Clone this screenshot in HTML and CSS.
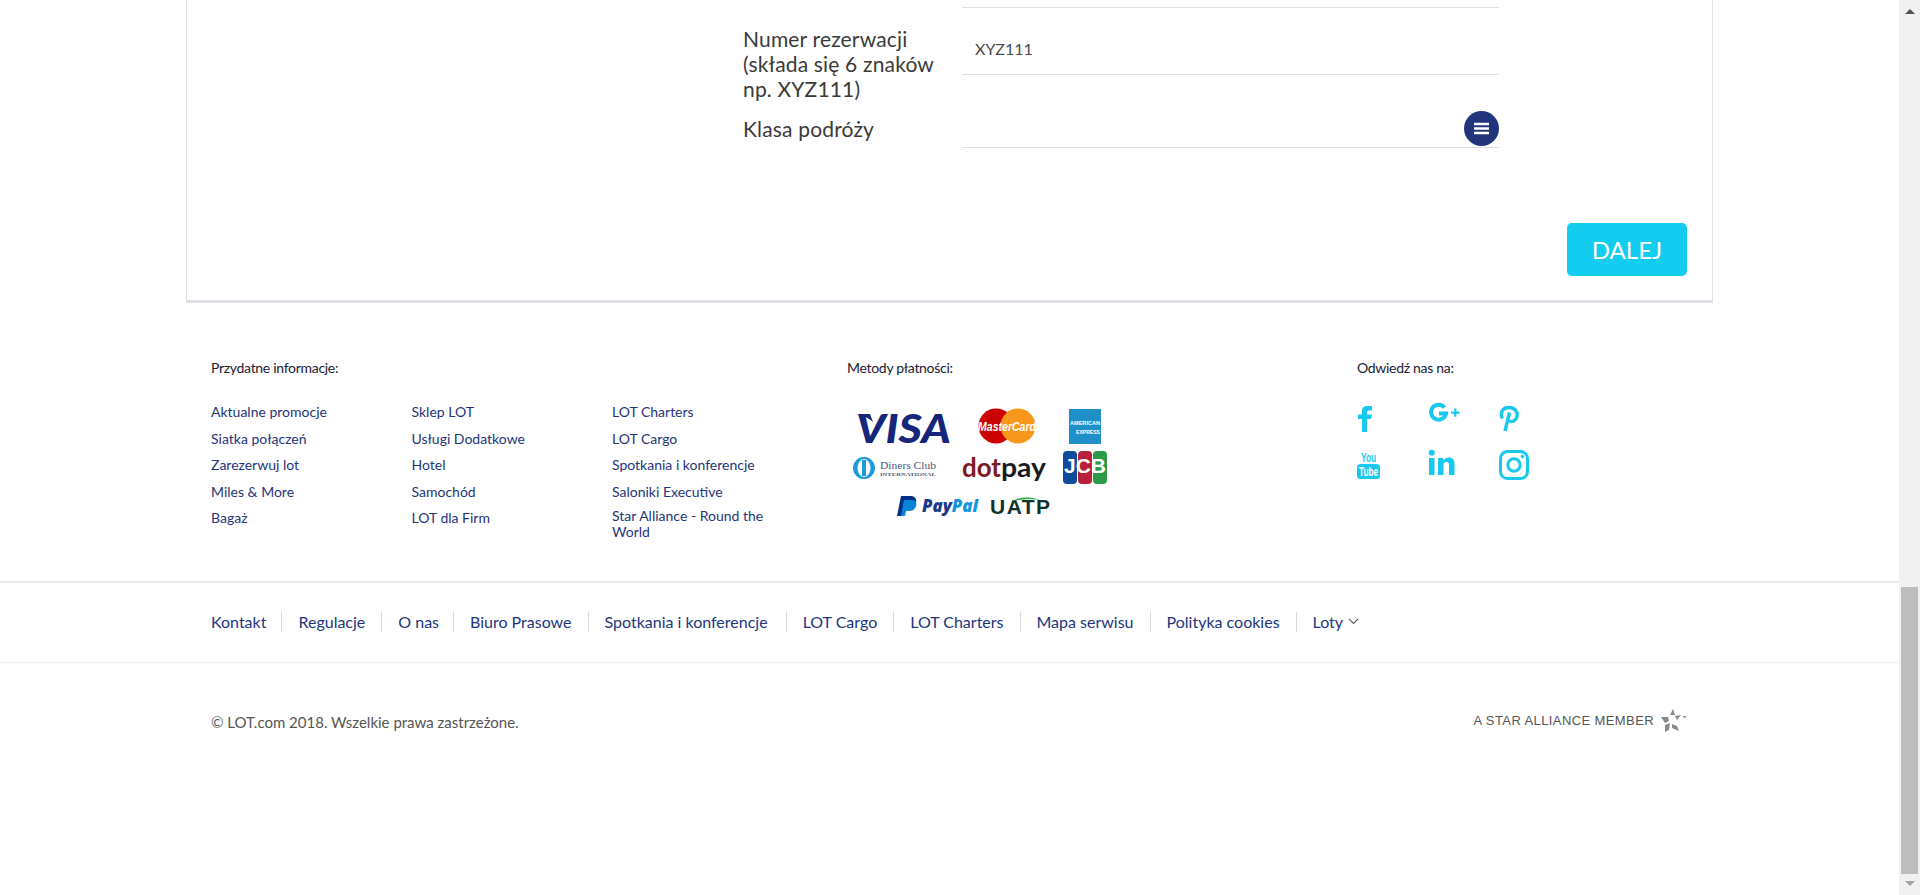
FILE: index.html
```html
<!DOCTYPE html>
<html lang="pl">
<head>
<meta charset="utf-8">
<title>LOT</title>
<link rel="stylesheet" href="styles.css">
</head>
<body>
<div class="window">
  <div class="page">
    <section class="card">
      <div class="stub"></div>
      <div class="form-row">
        <label class="label label-first">Numer rezerwacji<br>(składa się 6 znaków<br>np. XYZ111)</label>
        <div class="field field-text">XYZ111</div>
      </div>
      <div class="form-row">
        <label class="label label-second">Klasa podróży</label>
        <div class="field field-select">
          <span class="select-btn">
            <svg width="15" height="13" viewBox="0 0 15 13"><path d="M0 2h15M0 6.500h15M0 11h15" stroke="#fff" stroke-width="2.400"/></svg>
          </span>
        </div>
      </div>
      <div class="card-actions"><button class="btn">DALEJ</button></div>
    </section>

    <section class="info">
      <div class="info-links">
        <h4 class="info-title">Przydatne informacje:</h4>
        <div class="link-cols">
          <ul class="link-col">
            <li>Aktualne promocje</li><li>Siatka połączeń</li><li>Zarezerwuj lot</li><li>Miles &amp; More</li><li>Bagaż</li>
          </ul>
          <ul class="link-col">
            <li>Sklep LOT</li><li>Usługi Dodatkowe</li><li>Hotel</li><li>Samochód</li><li>LOT dla Firm</li>
          </ul>
          <ul class="link-col">
            <li>LOT Charters</li><li>LOT Cargo</li><li>Spotkania i konferencje</li><li>Saloniki Executive</li><li class="two-line">Star Alliance - Round the World</li>
          </ul>
        </div>
      </div>
      <div class="info-pay">
        <h4 class="info-title">Metody płatności:</h4>
        <svg class="pay-logos" width="270" height="120" viewBox="0 0 270 120">
          <!-- VISA -->
          <text x="9" y="38" class="t-visa" textLength="95" lengthAdjust="spacingAndGlyphs">VISA</text>
          <path d="M10 9h13l3 8C22 13 16 11 10 9z" fill="#16267a"/>
          <!-- MasterCard -->
          <circle cx="149" cy="21" r="17.500" fill="#cc0000"/>
          <circle cx="171" cy="21" r="17.500" fill="#f7981d"/>
          <text x="131" y="26" class="t-mc" textLength="58" lengthAdjust="spacingAndGlyphs">MasterCard</text>
          <!-- Amex -->
          <rect x="222" y="4" width="32" height="35" fill="#1f8fc9"/>
          <text x="223" y="20" class="t-amex" textLength="30" lengthAdjust="spacingAndGlyphs">AMERICAN</text>
          <text x="229" y="29" class="t-amex" textLength="24" lengthAdjust="spacingAndGlyphs">EXPRESS</text>
          <!-- Diners -->
          <circle cx="17" cy="63" r="11" fill="#1e9be0"/>
          <ellipse cx="17" cy="63" rx="6.500" ry="9" fill="#fff"/>
          <rect x="15" y="55" width="4" height="16" fill="#1e9be0"/>
          <text x="33" y="64" class="t-dc" textLength="56" lengthAdjust="spacingAndGlyphs">Diners Club</text>
          <text x="33" y="71" class="t-dc2" textLength="56" lengthAdjust="spacingAndGlyphs">INTERNATIONAL</text>
          <!-- dotpay -->
          <text x="115" y="72" class="t-dot" textLength="39" lengthAdjust="spacingAndGlyphs">dot</text>
          <text x="154" y="72" class="t-pay" textLength="45" lengthAdjust="spacingAndGlyphs">pay</text>
          <!-- JCB -->
          <rect x="216" y="46" width="14" height="33" rx="4" fill="#0f4c9c"/>
          <rect x="231" y="46" width="14" height="33" rx="4" fill="#b81f3a"/>
          <rect x="246" y="46" width="14" height="33" rx="4" fill="#2c9b47"/>
          <text x="217" y="68" class="t-jcb" textLength="42" lengthAdjust="spacingAndGlyphs">JCB</text>
          <!-- PayPal -->
          <path d="M54 91h9c5 0 7 3 6 7-1 4-4 6-8 6h-3l-2 7h-6z" fill="#003087"/>
          <path d="M57 95h8c4 0 5 3 4 6-1 3-3 5-7 5h-3l-1 5h-4z" fill="#0a84d6"/>
          <text x="75" y="107" class="t-pp" textLength="56" lengthAdjust="spacingAndGlyphs"><tspan fill="#1b3a8c">Pay</tspan><tspan fill="#1494dc">Pal</tspan></text>
          <!-- UATP -->
          <text x="143" y="109" class="t-uatp" textLength="60" lengthAdjust="spacing">UATP</text>
          <path d="M163 97c8-5 20-6 30-2-10-2-20-1-30 2z" fill="#2aa84a"/>
        </svg>
      </div>
      <div class="info-social">
        <h4 class="info-title">Odwiedź nas na:</h4>
        <div class="social-grid">
          <svg class="social" viewBox="0 0 36 36"><path d="M5 29V16H1v-4.500h4V8c0-3.600 2-5 5.300-5H15v4.600h-2.800C10.800 7.600 10 8 10 9.600v1.900h4.800l-.6 4.500H10v13z"/></svg>
          <svg class="social" viewBox="0 0 36 36"><path class="s-line" d="M16.500 4.500A7.500 7.500 0 1 0 18 10.500H11"/><path d="M23 8.500h3.200V5.500h2.200v3H31.500v2.200h-3.100v3h-2.200v-3H23z"/></svg>
          <svg class="social" viewBox="0 0 36 36"><path class="s-pin" d="M3.500 15.500C.5 10 3.500 4.500 10 4.500c5.800 0 9 4.500 8 9-1 4-5 6.500-8 4"/><path class="s-pin" d="M10.500 9.500L6 28"/></svg>
          <svg class="social" viewBox="0 0 36 36"><text x="4" y="13" class="t-you" textLength="15" lengthAdjust="spacingAndGlyphs">You</text><rect x="0" y="15" width="23" height="15" rx="3.500"/><text x="2" y="27" class="t-tube" textLength="19" lengthAdjust="spacingAndGlyphs">Tube</text></svg>
          <svg class="social" viewBox="0 0 36 36"><rect x="1" y="9" width="5.500" height="17"/><circle cx="3.700" cy="3.700" r="3"/><path d="M10 9h5.300v2.400C16.500 9.600 18.500 8.500 21 8.500c4 0 5.500 2.600 5.500 6.500v11H21V16c0-2-.7-3-2.500-3S15.500 14 15.500 16v10H10z"/></svg>
          <svg class="social" viewBox="0 0 36 36"><rect class="s-line3" x="1.500" y="2.500" width="27" height="27" rx="7"/><circle class="s-line3" cx="15" cy="16" r="6.200"/><circle cx="23.500" cy="7.500" r="1.800"/></svg>
        </div>
      </div>
    </section>

    <nav class="nav-row">
      <a class="nav-item nav-first">Kontakt</a>
      <a class="nav-item">Regulacje</a>
      <a class="nav-item nav-tight">O nas</a>
      <a class="nav-item">Biuro Prasowe</a>
      <a class="nav-item nav-wide">Spotkania i konferencje</a>
      <a class="nav-item">LOT Cargo</a>
      <a class="nav-item">LOT Charters</a>
      <a class="nav-item">Mapa serwisu</a>
      <a class="nav-item">Polityka cookies</a>
      <a class="nav-item nav-last">Loty
        <svg class="chev" width="11" height="7" viewBox="0 0 11 7"><path d="M.8.800L5.500 5.500 10.200.800" fill="none" stroke="#555b66" stroke-width="1.100"/></svg>
      </a>
    </nav>

    <div class="copy-row">
      <span class="copy">© LOT.com 2018. Wszelkie prawa zastrzeżone.</span>
      <span class="star">
        <span class="star-text">A STAR ALLIANCE MEMBER</span>
        <svg width="25" height="23" viewBox="0 0 25 23"><g fill="#8a8a8a"><path d="M12 0l2 6-5 0z"/><path d="M14 7l6-1-4 5z"/><path d="M0 8l7 0 1 4-4 2z"/><path d="M4 16l5-2-1 7-4 2z"/><path d="M11 15l5 2 2 5-7-3z"/><rect x="22" y="7" width="3" height="1.500"/></g></svg>
      </span>
    </div>
  </div>
  <aside class="scrollbar">
    <span class="arrow arrow-up"></span>
    <span class="thumb"></span>
    <span class="arrow arrow-down"></span>
  </aside>
</div>
</body>
</html>
```

FILE: styles.css
```css
* { box-sizing: border-box; }
html, body { margin: 0; padding: 0; height: 100%; overflow: hidden; background: #fff; }
body { font-family: Lato, "Noto Sans", sans-serif; color: #333; }
.window { display: flex; width: 1920px; height: 895px; }
.page { width: 1899px; height: 895px; overflow: hidden; }

.card { width: 1527px; height: 303px; margin-left: 186px; border: 1px solid #e1e2e8; border-top: 0; border-bottom: 3px solid #dfe0e6; }
.stub { width: 537px; height: 8px; margin-left: 775px; border-bottom: 1px solid #dcdee8; }
.form-row { display: grid; grid-template-columns: 219px 537px; margin-left: 556px; }
.label { display: block; font-size: 21px; letter-spacing: .17px; line-height: 25px; color: #3a3a3a; white-space: nowrap; }
.label-first { padding: 18px 0 1px; }
.label-second { padding-top: 14px; }
.field { border-bottom: 1px solid #dcdee8; }
.field-text { height: 67px; padding: 31px 0 0 13px; font-size: 16px; line-height: 20px; color: #4a4a4a; }
.field-select { height: 46px; display: flex; justify-content: flex-end; align-items: flex-start; padding-top: 9px; }
.select-btn { width: 35px; height: 35px; border-radius: 50%; background: #22357c; display: flex; align-items: center; justify-content: center; }
.card-actions { display: flex; justify-content: flex-end; margin-top: 75px; padding-right: 25px; }
.btn { width: 120px; height: 53px; border: 0; border-radius: 5px; background: #13cdf0; color: #fff; font: 400 24px Lato, sans-serif; padding: 0; }

.info { display: flex; height: 278px; padding: 57px 0 0 211px; }
.info-links { width: 636px; }
.info-pay { width: 510px; }
.info-title { margin: 0; font-size: 14px; letter-spacing: -.3px; line-height: 16px; font-weight: 400; color: #1b2033; }
.link-cols { display: flex; margin-top: 23px; }
.link-col { list-style: none; margin: 0; padding: 0; width: 200.500px; }
.link-col li { height: 26.500px; font-size: 14px; line-height: 26.500px; color: #25357a; }
.link-col li.two-line { line-height: 16px; width: 170px; padding-top: 3px; }
.pay-logos { display: block; margin: 29px 0 0 0; }
.t-visa { font: italic 900 40px Lato, sans-serif; fill: #16267a; }
.t-mc { font: italic 700 12px "Liberation Sans", sans-serif; fill: #fff; }
.t-amex { font: 700 6px "Liberation Sans", sans-serif; fill: #fff; }
.t-dc { font: 400 11px "Liberation Serif", serif; fill: #4c5a7a; }
.t-dc2 { font: 700 5px "Liberation Serif", serif; fill: #4c5a7a; }
.t-dot { font: 700 26px Lato, sans-serif; fill: #7c1a24; }
.t-pay { font: 700 26px Lato, sans-serif; fill: #1a1a22; }
.t-jcb { font: 700 20px "Liberation Sans", sans-serif; fill: #fff; }
.t-pp { font: italic 900 17px "Open Sans", sans-serif; }
.t-uatp { font: 700 21px "Liberation Sans", sans-serif; fill: #10322c; }

.social-grid { display: grid; grid-template-columns: repeat(3, 71px); grid-auto-rows: 46px; margin-top: 27px; }
.social { width: 36px; height: 36px; fill: #17c9ef; overflow: visible; }
.s-line { fill: none; stroke: #17c9ef; stroke-width: 4; }
.s-pin { fill: none; stroke: #17c9ef; stroke-width: 3.400; }
.s-line3 { fill: none; stroke: #17c9ef; stroke-width: 3; }
.t-you { font: 700 13px "Liberation Sans", sans-serif; fill: #17c9ef; }
.t-tube { font: 700 12px "Liberation Sans", sans-serif; fill: #fff; }

.nav-row { display: flex; align-items: center; height: 82px; padding: 0 0 2px 195px; border-top: 2px solid #e9eaee; border-bottom: 1px solid #eceef2; }
.nav-item { display: block; padding: 0 16px; height: 20px; font-size: 16px; line-height: 20px; color: #22357c; border-right: 1px solid #d9dade; white-space: nowrap; }
.nav-first { padding-right: 15px; }
.nav-tight { padding-right: 14px; }
.nav-wide { padding-right: 18px; }
.nav-last { border-right: 0; display: flex; align-items: center; gap: 5px; }
.copy-row { display: flex; justify-content: space-between; align-items: center; width: 1686px; padding: 46px 0 0 211px; }
.copy { font-size: 15px; line-height: 20px; color: #555; }
.star { display: flex; align-items: center; gap: 7px; margin-bottom: 2px; }
.star-text { font: 400 13px "Liberation Sans", sans-serif; letter-spacing: .4px; color: #555; white-space: nowrap; }

.scrollbar { position: relative; width: 21px; height: 895px; background: #f1f1f1; }
.thumb { position: absolute; left: 2px; top: 587px; width: 17px; height: 287px; background: #bdbdbd; }
.arrow { position: absolute; left: 6px; width: 0; height: 0; border-left: 5px solid transparent; border-right: 5px solid transparent; }
.arrow-up { top: 9px; border-bottom: 5px solid #505050; }
.arrow-down { top: 881px; border-top: 5px solid #a3a3a3; }
```
